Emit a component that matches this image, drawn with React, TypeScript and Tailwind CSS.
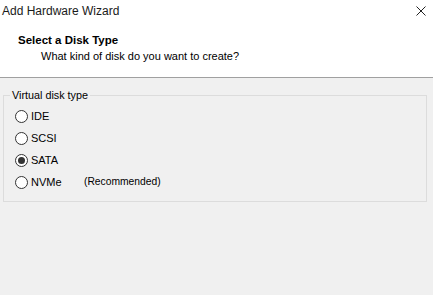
const options = [
  { label: "IDE", checked: false },
  { label: "SCSI", checked: false },
  { label: "SATA", checked: true },
  { label: "NVMe", checked: false, note: "(Recommended)" },
];

const Radio = ({ checked }: { checked: boolean }) => (
  <span className="w-[13px] h-[13px] rounded-full border border-[#333333] bg-white flex items-center justify-center shrink-0">
    {checked && <span className="w-[7px] h-[7px] rounded-full bg-[#333333]" />}
  </span>
);

const App = () => {
  return (
    <div className="w-[433px] h-[295px] flex flex-col bg-[#f0f0f0] text-black text-[11px] font-['Liberation_Sans',Arial,sans-serif] overflow-hidden">
      {/* Header */}
      <div className="h-[78px] bg-white border-b border-[#a0a0a0] flex flex-col shrink-0">
        <div className="h-[22px] flex items-center justify-between pl-[2px] pr-[7px]">
          <span className="text-[12px] leading-[14px] text-[#1a1a1a]">Add Hardware Wizard</span>
          <svg width="10" height="10" viewBox="0 0 10 10" className="text-[#222]">
            <path d="M0.5 0.5L9.5 9.5M9.5 0.5L0.5 9.5" stroke="currentColor" strokeWidth="1" fill="none" />
          </svg>
        </div>
        <div className="pl-[18px] pt-[11px] font-bold leading-[14px] text-[11.5px]">Select a Disk Type</div>
        <div className="pl-[41px] pt-[2px] leading-[14px]">What kind of disk do you want to create?</div>
      </div>

      {/* Disk type group */}
      <fieldset className="mt-[10px] ml-[3px] w-[424px] h-[114px] border border-[#dcdcdc] pl-[6px]">
        <legend className="px-[2px] leading-[14px] text-[10.8px]">Virtual disk type</legend>
        <div className="flex flex-col ml-[5px] mt-[3px]">
          {options.map((o) => (
            <div key={o.label} className="h-[22px] flex items-center gap-[3px]">
              <Radio checked={o.checked} />
              <span className="w-[50px] leading-[14px]">{o.label}</span>
              {o.note && <span className="leading-[14px] text-[10.3px]">{o.note}</span>}
            </div>
          ))}
        </div>
      </fieldset>
    </div>
  );
};

export default App;
